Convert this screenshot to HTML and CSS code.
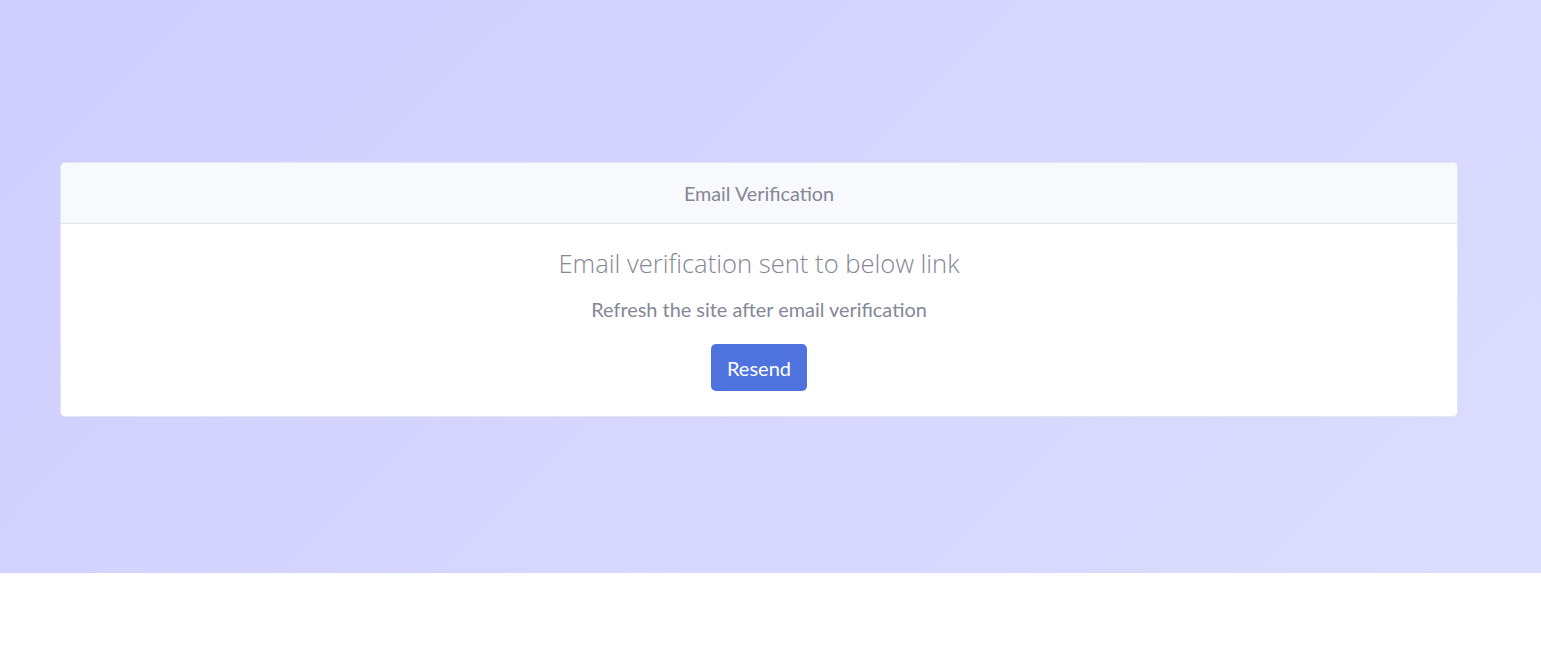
FILE: index.html
```html
<!DOCTYPE html>
<html>
<head>
<meta charset="utf-8">
<link rel="stylesheet" href="styles.css">
</head>
<body>
<section class="hero">
  <div class="card">
    <div class="card-header">Email Verification</div>
    <div class="card-body">
      <h4 class="title">Email verification sent to below link</h4>
      <p class="note">Refresh the site after email verification</p>
      <button class="btn">Resend</button>
    </div>
  </div>
</section>
</body>
</html>
```
FILE: styles.css
```css
html, body { margin: 0; padding: 0; background: #fff; }
body { font-family: Lato, "Liberation Sans", sans-serif; color: #858796; }
.hero {
  height: 573px;
  background: linear-gradient(135deg, #cfcfff 0%, #dcdcff 100%);
  display: flex;
  align-items: flex-start;
  padding-top: 162px;
  box-sizing: border-box;
}
.card {
  margin: 0 83px 0 60px;
  flex: 1;
  background: #fff;
  border: 1px solid #e3e6f0;
  border-radius: 5px;
  overflow: hidden;
}
.card-header {
  background: #f8f9fc;
  border-bottom: 1px solid #e3e6f0;
  height: 60px;
  display: flex;
  align-items: center;
  justify-content: center;
  font-size: 19.8px;
  color: #858796;
}
.card-body {
  display: flex;
  flex-direction: column;
  align-items: center;
  padding: 24px 0 25px;
}
.title {
  margin: 0;
  font-family: "Open Sans", sans-serif;
  font-weight: 300;
  font-size: 25.6px;
  line-height: 32px;
  color: #858796;
}
.note {
  margin: 16px 0 0;
  font-size: 19.9px;
  line-height: 26px;
}
.btn {
  margin-top: 22px;
  width: 96px;
  height: 47px;
  border: none;
  border-radius: 5px;
  background: #4e73df;
  color: #fff;
  font-family: Lato, sans-serif;
  font-size: 20px;
  padding: 0;
}
```
